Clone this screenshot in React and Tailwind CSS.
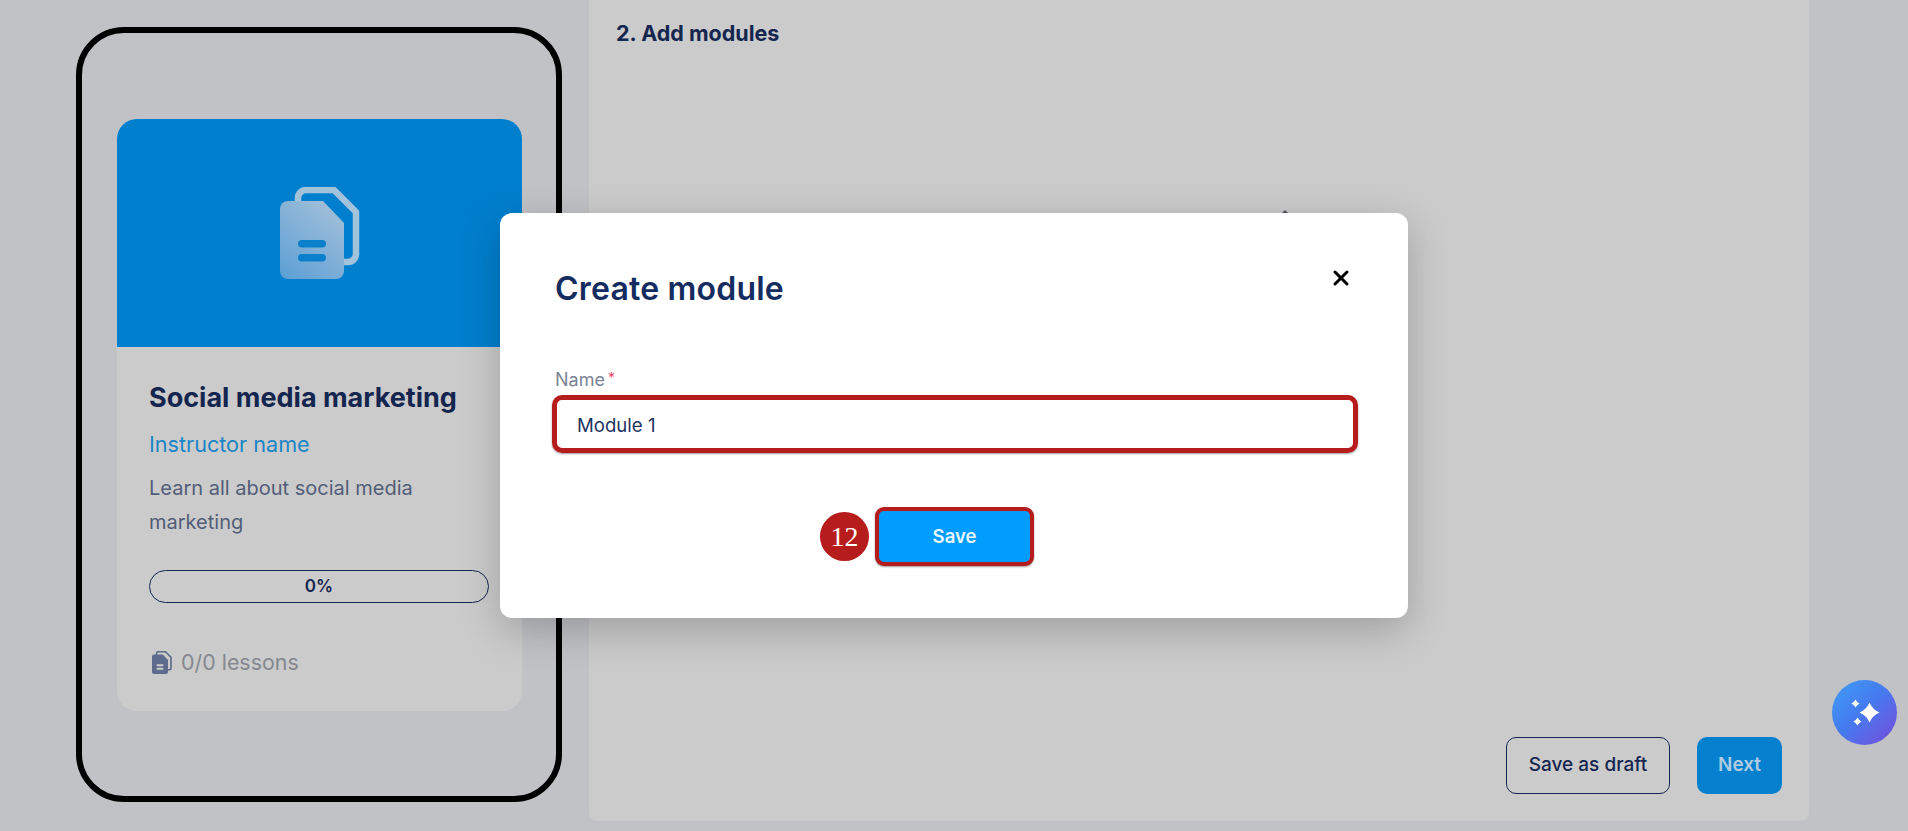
import { X } from "lucide-react";

function FilesIcon({ className, id, front, back, line = "#0a80cd" }) {
  return (
    <svg viewBox="0 0 80 92" className={className} fill="none">
      <defs>
        <linearGradient id={id} x1="64" y1="14" x2="0" y2="92" gradientUnits="userSpaceOnUse">
          <stop offset="0" stopColor={front[0]} />
          <stop offset="1" stopColor={front[1]} />
        </linearGradient>
      </defs>
      <path
        d="M18 16V11a8 8 0 0 1 8-8H54L76 25V67a8 8 0 0 1-8 8H62"
        stroke={back}
        strokeWidth="6.5"
        strokeLinejoin="round"
      />
      <path
        d="M8 14H43L64 36V84a8 8 0 0 1-8 8H8a8 8 0 0 1-8-8V22a8 8 0 0 1 8-8Z"
        fill={`url(#${id})`}
      />
      <rect x="18" y="53" width="28" height="7.5" rx="3.75" fill={line} />
      <rect x="18" y="67" width="28" height="7.5" rx="3.75" fill={line} />
    </svg>
  );
}

function Sparkles() {
  return (
    <svg viewBox="0 0 40 40" className="w-10 h-10" fill="white">
      <path d="M24.500 9.500Q27.500 16.500 34.500 19.500Q27.500 22.500 24.500 29.500Q21.500 22.500 14.500 19.500Q21.500 16.500 24.500 9.500Z" />
      <path d="M10.500 6.500Q11.800 9.200 14.500 10.500Q11.800 11.800 10.500 14.500Q9.200 11.800 6.500 10.500Q9.200 9.200 10.500 6.500Z" />
      <path d="M12.500 24.500Q13.800 27.200 16.500 28.500Q13.800 29.800 12.500 32.500Q11.200 29.800 8.500 28.500Q11.200 27.200 12.500 24.500Z" />
    </svg>
  );
}

export default function App() {
  return (
    <div className="relative h-[831px] w-full overflow-hidden bg-[#c1c2c5] font-['Inter',sans-serif] text-[#14264f]">
      <div className="flex items-start pl-[76px] gap-[27px]">
        {/* phone preview */}
        <div className="mt-[27px] h-[775px] w-[486px] shrink-0 rounded-[48px] border-[6px] border-black pl-[35px] pt-[86px]">
          <div className="h-[592px] w-[405px] overflow-hidden rounded-[20px] bg-[#cbcbcb]">
            <div className="flex h-[228px] items-center justify-center bg-[#007fce]">
              <FilesIcon
                id="bigFiles"
                className="w-[80px] h-[92px]"
                front={["#a9c2d8", "#5a9fd6"]}
                back="#a2c3da"
              />
            </div>
            <div className="px-8 pt-[32px]">
              <div className="text-[27px] leading-[38px] font-bold whitespace-nowrap">Social media marketing</div>
              <div className="mt-[12px] text-[21.600px] leading-[30px] text-[#1a86c8]">Instructor name</div>
              <p className="mt-[12px] text-[20px] leading-[34px] text-[#525d78]">Learn all about social media marketing</p>
              <div className="mt-[31px] flex h-[33px] w-[340px] items-center justify-center rounded-full border border-[#14264f] text-[17px] font-semibold">
                0%
              </div>
              <div className="mt-[46px] flex items-center gap-[9px] pl-[3px]">
                <FilesIcon
                  id="smallFiles"
                  className="w-[20px] h-[23px]"
                  front={["#5d6c8c", "#5d6c8c"]}
                  back="#5d6c8c"
                  line="#cbcbcb"
                />
                <span className="text-[21.400px] leading-[26px] text-[#85888f]">0/0 lessons</span>
              </div>
            </div>
          </div>
        </div>

        {/* form panel */}
        <div className="h-[821px] flex-1 max-w-[1220px] rounded-b-lg bg-[#cbcbcb] px-[27px] pt-[19px] flex flex-col">
          <h2 className="text-[21.500px] leading-[28px] font-bold">2. Add modules</h2>
          <div className="mt-auto mb-[27px] flex justify-end gap-[27px] pr-0">
            <button className="h-[57px] w-[164px] rounded-[10px] border border-[#14264f] text-[19px] font-medium">
              Save as draft
            </button>
            <button className="h-[57px] w-[85px] rounded-[10px] bg-[#0480cf] text-[19px] font-semibold text-[#aecbe0]">
              Next
            </button>
          </div>
        </div>
      </div>

      {/* assistant button */}
      <button className="absolute left-[1832px] top-[680px] flex h-[65px] w-[65px] items-center justify-center rounded-full bg-gradient-to-br from-[#3f9df6] via-[#4578ee] to-[#7146d8]">
        <Sparkles />
      </button>

      {/* tiny tip poking above the dialog */}
      <div className="absolute left-[1282px] top-[210px] h-0 w-0 border-x-[3px] border-b-[3px] border-x-transparent border-b-[#55585e]" />

      {/* dialog */}
      <div className="absolute left-[500px] top-[213px] h-[405px] w-[908px] rounded-[12px] bg-white pl-[52px] pt-[56px] shadow-[0_12px_40px_rgba(0,0,0,0.22)]">
        <div className="flex items-center justify-between pr-[55px]">
          <h1 className="ml-[3px] text-[32px] leading-[40px] tracking-[0.2px] font-semibold text-[#152c60]">Create module</h1>
          <button className="-mt-[22px] text-black">
            <X size={24} strokeWidth={3} />
          </button>
        </div>
        <div className="ml-[3px] mt-[59px] flex text-[18px] leading-[24px] text-[#7b8494]">
          Name<span className="ml-[3px] -mt-[2px] text-[14px] text-[#e8476b]">*</span>
        </div>
        <div className="mt-[3px] flex h-[58px] w-[806px] items-center rounded-[10px] border-[5px] border-[#b71c1c] pl-[20px] pt-[3px] text-[18.600px] text-[#1d3361] shadow-[0_1px_2px_rgba(0,0,0,0.4)]">
          Module 1
        </div>
        <div className="mt-[54px] flex items-center pl-[268px]">
          <div className="flex h-[49px] w-[49px] items-center justify-center rounded-full bg-[#b71c1c] font-['Liberation_Serif',serif] text-[28px] text-white">
            12
          </div>
          <button className="ml-[6px] h-[59px] w-[159px] rounded-[9px] border-[4px] border-[#b71c1c] bg-[#009dff] text-[18.500px] font-semibold text-[#eaf6ff] shadow-[0_1px_2px_rgba(0,0,0,0.4)]">
            Save
          </button>
        </div>
      </div>
    </div>
  );
}
